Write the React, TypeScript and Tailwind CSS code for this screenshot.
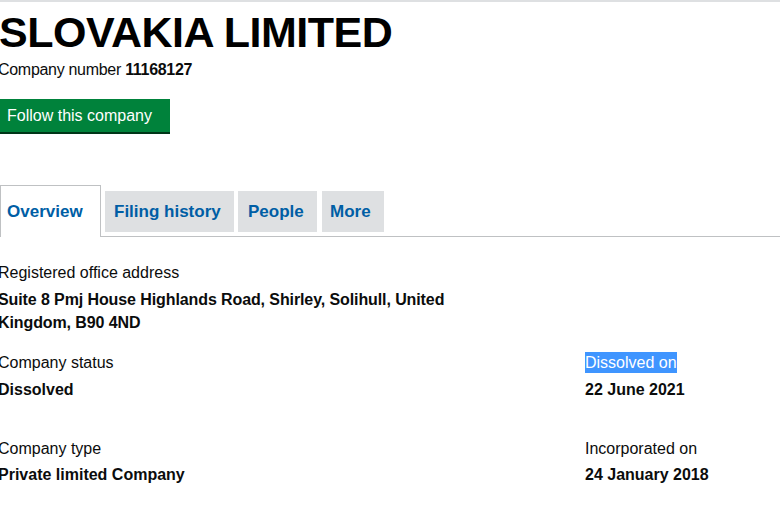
export default function App() {
  return (
    <div className="min-h-screen bg-white text-[#0b0c0c] font-['Liberation_Sans',Arial,sans-serif] overflow-hidden">
      <div className="h-[2px] bg-[#dee0e2]" />

      <div className="ml-[-2px]">
        {/* Heading */}
        <h1 className="mt-[9px] ml-[1px] text-[43px] font-bold leading-none tracking-[-0.5px] text-black">
          SLOVAKIA LIMITED
        </h1>
        <p className="mt-[4px] text-[16px] leading-6 tracking-[-0.3px]">
          Company number <strong className="font-bold">11168127</strong>
        </p>

        <button className="mt-[17px] ml-[2px] w-[170px] h-[33px] bg-[#00823b] text-white text-[16px] text-left pl-[7px] shadow-[0_2px_0_#003618] leading-none">
          Follow this company
        </button>

        {/* Tabs */}
        <ul className="mt-[53px] ml-[2px] flex items-end border-b border-[#bfc1c3] text-[17px] font-bold text-[#005ea5]">
          <li className="mb-[-1px] w-[101px] h-[52px] border border-b-0 border-[#bfc1c3] bg-white pl-[6px] flex items-center mr-[4px]">
            Overview
          </li>
          <li className="mb-[4px] w-[129px] h-[41px] bg-[#dee0e2] pl-[9px] flex items-center mr-[4px]">
            Filing history
          </li>
          <li className="mb-[4px] w-[79px] h-[41px] bg-[#dee0e2] pl-[10px] flex items-center mr-[5px]">
            People
          </li>
          <li className="mb-[4px] w-[62px] h-[41px] bg-[#dee0e2] pl-[8px] flex items-center">
            More
          </li>
        </ul>

        {/* Details */}
        <div className="mt-[24px] text-[16px]">
          <div>
            <p className="leading-6">Registered office address</p>
            <p className="mt-[3px] leading-[23px] font-bold tracking-[-0.1px]">
              Suite 8 Pmj House Highlands Road, Shirley, Solihull, United
              <br />
              Kingdom, B90 4ND
            </p>
          </div>

          <div className="mt-[17px] grid grid-cols-[587px_1fr]">
            <div>
              <p className="leading-6">Company status</p>
              <p className="mt-[3px] leading-6 font-bold">Dissolved</p>
            </div>
            <div>
              <p className="leading-6">
                <span className="bg-[#3f95ff] text-white py-[2px]">Dissolved on</span>
              </p>
              <p className="mt-[3px] leading-6 font-bold">22 June 2021</p>
            </div>
          </div>

          <div className="mt-[35px] grid grid-cols-[587px_1fr]">
            <div>
              <p className="leading-6">Company type</p>
              <p className="mt-[2px] leading-6 font-bold">Private limited Company</p>
            </div>
            <div>
              <p className="leading-6">Incorporated on</p>
              <p className="mt-[2px] leading-6 font-bold">24 January 2018</p>
            </div>
          </div>
        </div>
      </div>
    </div>
  );
}
